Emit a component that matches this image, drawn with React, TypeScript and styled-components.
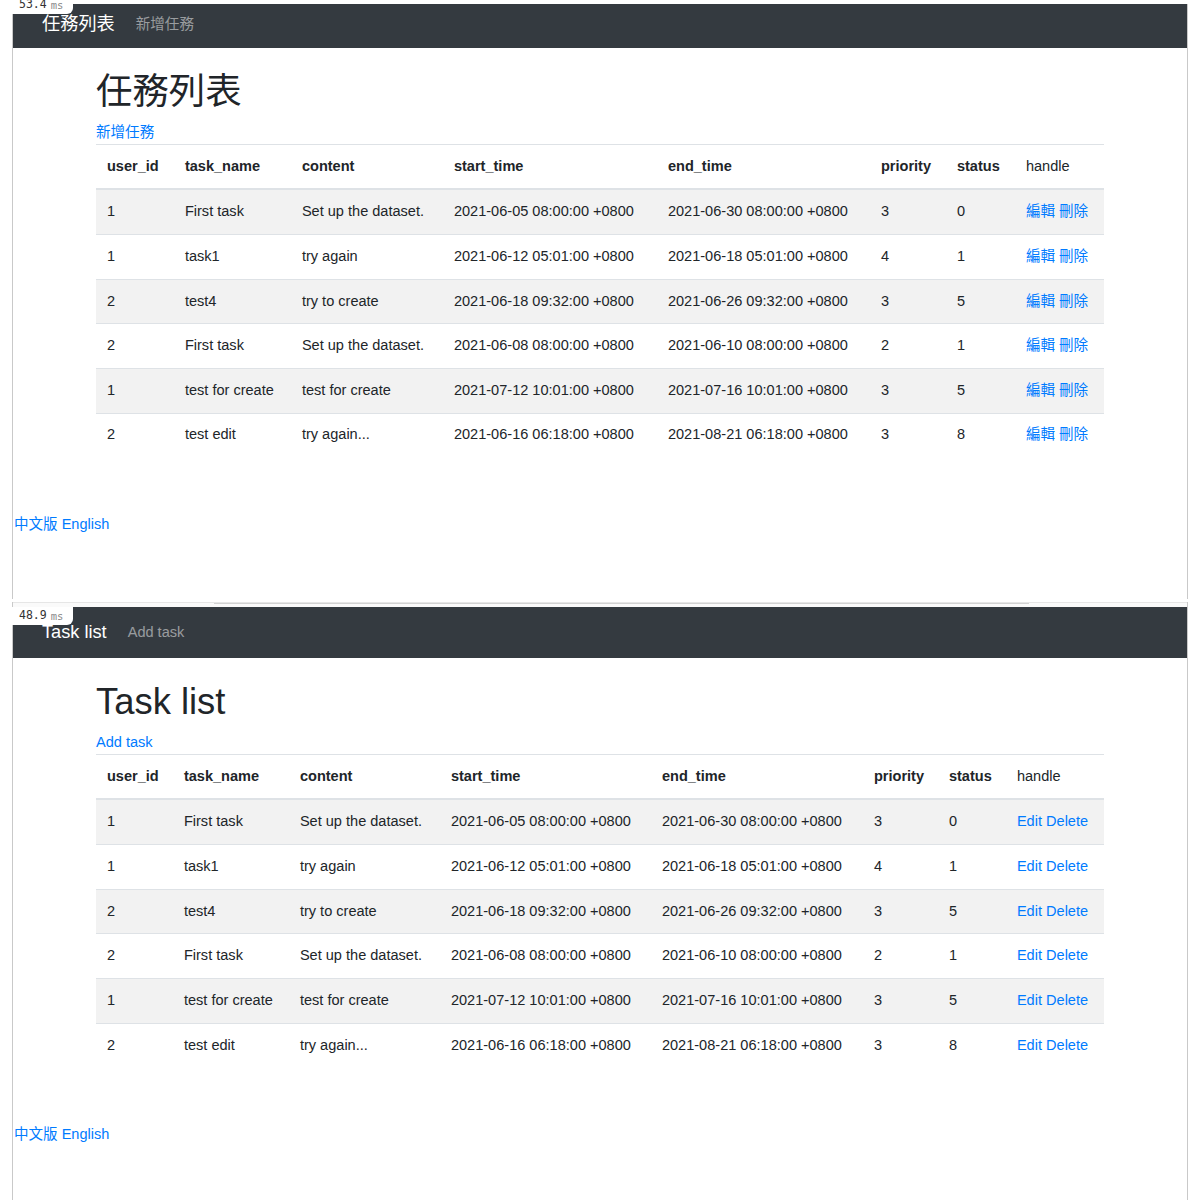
import React from "react";
import styled, { createGlobalStyle } from "styled-components";

const Global = createGlobalStyle`
  html, body { margin: 0; padding: 0; background: #fff; }
  body {
    font-family: "Liberation Sans", "Noto Sans CJK TC", Arial, sans-serif;
    font-size: 14.56px;
    line-height: 1.5;
    color: #212529;
    overflow: hidden;
  }
  * { box-sizing: border-box; }
`;

const Page = styled.div`
  width: 1188px;
  padding-left: 12px;
  display: flex;
  flex-direction: column;
`;

const Panel = styled.section<{ $top: number }>`
  position: relative;
  margin-top: ${(p) => p.$top}px;
  border-left: 1px solid #c9c9c9;
  border-right: 1px solid #c9c9c9;
  padding-bottom: 63px;
  display: flex;
  flex-direction: column;
`;

const TopStrip = styled.div`
  height: 5px;
  border-top: 1px solid #e6e6e6;
  background: #fafafa;
  padding-left: 201px;
  display: flex;
`;

const Thumb = styled.div`
  width: 815px;
  height: 1px;
  background: #d2d2d2;
`;

const Badge = styled.div<{ $top: number }>`
  position: absolute;
  left: -1px;
  top: ${(p) => p.$top}px;
  width: 61px;
  height: 18px;
  background: #fff;
  border-bottom-right-radius: 6px;
  padding-left: 7px;
  display: flex;
  align-items: center;
  gap: 4px;
  font-family: "DejaVu Sans Mono", "Liberation Mono", monospace;
  line-height: 1;
  z-index: 2;
`;

const BadgeNum = styled.span`
  font-size: 11.5px;
  color: #333;
`;

const BadgeUnit = styled.span`
  font-size: 10.5px;
  color: #8a8a8a;
`;

const Navbar = styled.nav<{ $h: number; $pb: number }>`
  height: ${(p) => p.$h}px;
  background: #343a40;
  display: flex;
  align-items: center;
  padding: 0 0 ${(p) => p.$pb}px 29px;
`;

const Brand = styled.a`
  font-size: 18.2px;
  line-height: 1.5;
  color: #fff;
  margin-right: 14px;
  text-decoration: none;
`;

const NavLink = styled.a`
  font-size: 14.56px;
  color: rgba(255, 255, 255, 0.5);
  padding: 0 7px;
  text-decoration: none;
`;

const Container = styled.main`
  margin-left: 83px;
  width: 1008px;
  padding-top: 22.3px;
  display: flex;
  flex-direction: column;
`;

const Title = styled.h1`
  margin: 0 0 7.8px;
  font-size: 36.4px;
  font-weight: 400;
  line-height: 1.2;
`;

const Link = styled.a`
  color: #007bff;
  text-decoration: none;
`;

const AddLink = styled(Link)`
  align-self: flex-start;
`;

const Table = styled.table`
  width: 1008px;
  table-layout: fixed;
  border-collapse: collapse;
  font-size: 14.56px;
`;

const Col = styled.col<{ $w: number }>`
  width: ${(p) => p.$w}px;
`;

const Th = styled.th<{ $plain?: boolean }>`
  text-align: left;
  padding: 10.92px;
  font-weight: ${(p) => (p.$plain ? 400 : 700)};
  border-top: 1px solid #dee2e6;
  border-bottom: 2px solid #dee2e6;
  white-space: nowrap;
`;

const Tr = styled.tr<{ $striped: boolean }>`
  background: ${(p) => (p.$striped ? "rgba(0,0,0,0.05)" : "transparent")};
`;

const Td = styled.td`
  padding: 10.92px;
  border-top: 1px solid #dee2e6;
  white-space: nowrap;
  vertical-align: top;
`;

const Footer = styled.div`
  margin-top: 57px;
  display: flex;
  gap: 4px;
  padding-left: 1px;
`;

type Row = [number, string, string, string, string, number, number];

const rows: Row[] = [
  [1, "First task", "Set up the dataset.", "2021-06-05 08:00:00 +0800", "2021-06-30 08:00:00 +0800", 3, 0],
  [1, "task1", "try again", "2021-06-12 05:01:00 +0800", "2021-06-18 05:01:00 +0800", 4, 1],
  [2, "test4", "try to create", "2021-06-18 09:32:00 +0800", "2021-06-26 09:32:00 +0800", 3, 5],
  [2, "First task", "Set up the dataset.", "2021-06-08 08:00:00 +0800", "2021-06-10 08:00:00 +0800", 2, 1],
  [1, "test for create", "test for create", "2021-07-12 10:01:00 +0800", "2021-07-16 10:01:00 +0800", 3, 5],
  [2, "test edit", "try again...", "2021-06-16 06:18:00 +0800", "2021-08-21 06:18:00 +0800", 3, 8],
];

const headers = ["user_id", "task_name", "content", "start_time", "end_time", "priority", "status"];

type Lang = {
  ms: string;
  title: string;
  add: string;
  edit: string;
  del: string;
  cols: number[];
};

const zh: Lang = {
  ms: "53.4",
  title: "任務列表",
  add: "新增任務",
  edit: "編輯",
  del: "刪除",
  cols: [78, 117, 152, 214, 213, 76, 69, 89],
};

const en: Lang = {
  ms: "48.9",
  title: "Task list",
  add: "Add task",
  edit: "Edit",
  del: "Delete",
  cols: [77, 116, 151, 211, 212, 75, 68, 98],
};

function TaskPage({ lang, first }: { lang: Lang; first: boolean }) {
  return (
    <Panel $top={first ? 4 : 3}>
      {!first && (
        <TopStrip>
          <Thumb />
        </TopStrip>
      )}
      <Badge $top={first ? -8 : 5}>
        <BadgeNum>{lang.ms}</BadgeNum>
        <BadgeUnit>ms</BadgeUnit>
      </Badge>
      <Navbar $h={first ? 44 : 51} $pb={first ? 3 : 0}>
        <Brand>{lang.title}</Brand>
        <NavLink>{lang.add}</NavLink>
      </Navbar>
      <Container>
        <Title>{lang.title}</Title>
        <AddLink>{lang.add}</AddLink>
        <Table>
          <colgroup>
            {lang.cols.map((w, i) => (
              <Col key={i} $w={w} />
            ))}
          </colgroup>
          <thead>
            <tr>
              {headers.map((h) => (
                <Th key={h}>{h}</Th>
              ))}
              <Th $plain>handle</Th>
            </tr>
          </thead>
          <tbody>
            {rows.map((r, i) => (
              <Tr key={i} $striped={i % 2 === 0}>
                {r.map((c, j) => (
                  <Td key={j}>{c}</Td>
                ))}
                <Td>
                  <Link>{lang.edit}</Link> <Link>{lang.del}</Link>
                </Td>
              </Tr>
            ))}
          </tbody>
        </Table>
      </Container>
      <Footer>
        <Link>中文版</Link>
        <Link>English</Link>
      </Footer>
    </Panel>
  );
}

export default function App() {
  return (
    <>
      <Global />
      <Page>
        <TaskPage lang={zh} first />
        <TaskPage lang={en} first={false} />
      </Page>
    </>
  );
}
